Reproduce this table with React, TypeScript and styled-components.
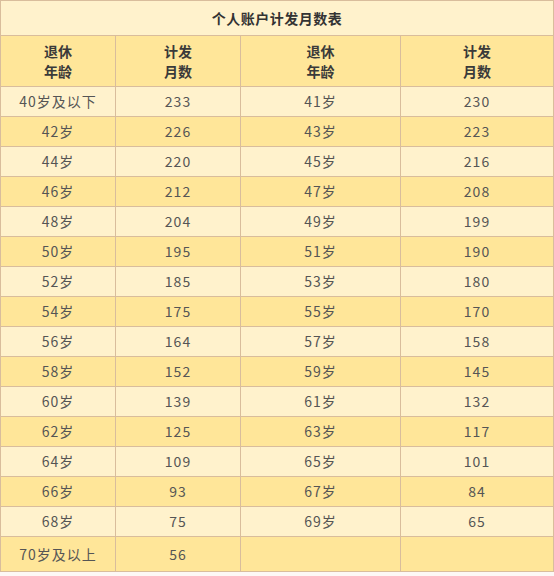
import React from 'react';
import styled, { createGlobalStyle } from 'styled-components';

const GlobalStyle = createGlobalStyle`
  html, body {
    margin: 0;
    padding: 0;
    background: #fdf8f6;
  }
  body {
    font-family: "Noto Sans CJK SC", "Noto Sans", sans-serif;
  }
`;

const LIGHT = '#fff2cc';
const DARK = '#ffe699';
const LINE = '#d9bd9c';

const StyledTable = styled.table`
  width: 554px;
  border-collapse: collapse;
  table-layout: fixed;
  border: 1px solid ${LINE};
`;

const StyledTitle = styled.th`
  height: 33px;
  padding: 0 0 1px;
  background: ${LIGHT};
  border: 1px solid ${LINE};
  color: #333;
  font-size: 14px;
  font-weight: 700;
  letter-spacing: 0.5px;
  text-align: center;
`;

const StyledHead = styled.th`
  height: 49px;
  padding: 0 0 1px;
  background: ${DARK};
  border: 1px solid ${LINE};
  color: #3a3a3a;
  font-size: 14px;
  font-weight: 700;
  line-height: 20px;
  text-align: center;
`;

const StyledRow = styled.tr<{ $dark: boolean }>`
  background: ${(p) => (p.$dark ? DARK : LIGHT)};
`;

const StyledCell = styled.td<{ $tall?: boolean }>`
  height: ${(p) => (p.$tall ? '33px' : '28px')};
  padding: 0 0 1px;
  border: 1px solid ${LINE};
  color: #555;
  font-size: 14px;
  letter-spacing: 1px;
  text-align: center;
`;

const rows: [string, number, string, number][] = [
  ['40岁及以下', 233, '41岁', 230],
  ['42岁', 226, '43岁', 223],
  ['44岁', 220, '45岁', 216],
  ['46岁', 212, '47岁', 208],
  ['48岁', 204, '49岁', 199],
  ['50岁', 195, '51岁', 190],
  ['52岁', 185, '53岁', 180],
  ['54岁', 175, '55岁', 170],
  ['56岁', 164, '57岁', 158],
  ['58岁', 152, '59岁', 145],
  ['60岁', 139, '61岁', 132],
  ['62岁', 125, '63岁', 117],
  ['64岁', 109, '65岁', 101],
  ['66岁', 93, '67岁', 84],
  ['68岁', 75, '69岁', 65],
];

const HeadPair = () => (
  <>
    <StyledHead>
      退休
      <br />
      年龄
    </StyledHead>
    <StyledHead>
      计发
      <br />
      月数
    </StyledHead>
  </>
);

const App = () => {
  return (
    <>
      <GlobalStyle />
      <StyledTable>
        <colgroup>
          <col style={{ width: 115 }} />
          <col style={{ width: 125 }} />
          <col style={{ width: 160 }} />
          <col />
        </colgroup>
        <thead>
          <tr>
            <StyledTitle colSpan={4}>个人账户计发月数表</StyledTitle>
          </tr>
          <tr>
            <HeadPair />
            <HeadPair />
          </tr>
        </thead>
        <tbody>
          {rows.map(([a, b, c, d], i) => (
            <StyledRow key={a} $dark={i % 2 === 1}>
              <StyledCell>{a}</StyledCell>
              <StyledCell>{b}</StyledCell>
              <StyledCell>{c}</StyledCell>
              <StyledCell>{d}</StyledCell>
            </StyledRow>
          ))}
          <StyledRow $dark>
            <StyledCell $tall>70岁及以上</StyledCell>
            <StyledCell $tall>56</StyledCell>
            <StyledCell $tall />
            <StyledCell $tall />
          </StyledRow>
        </tbody>
      </StyledTable>
    </>
  );
};

export default App;
